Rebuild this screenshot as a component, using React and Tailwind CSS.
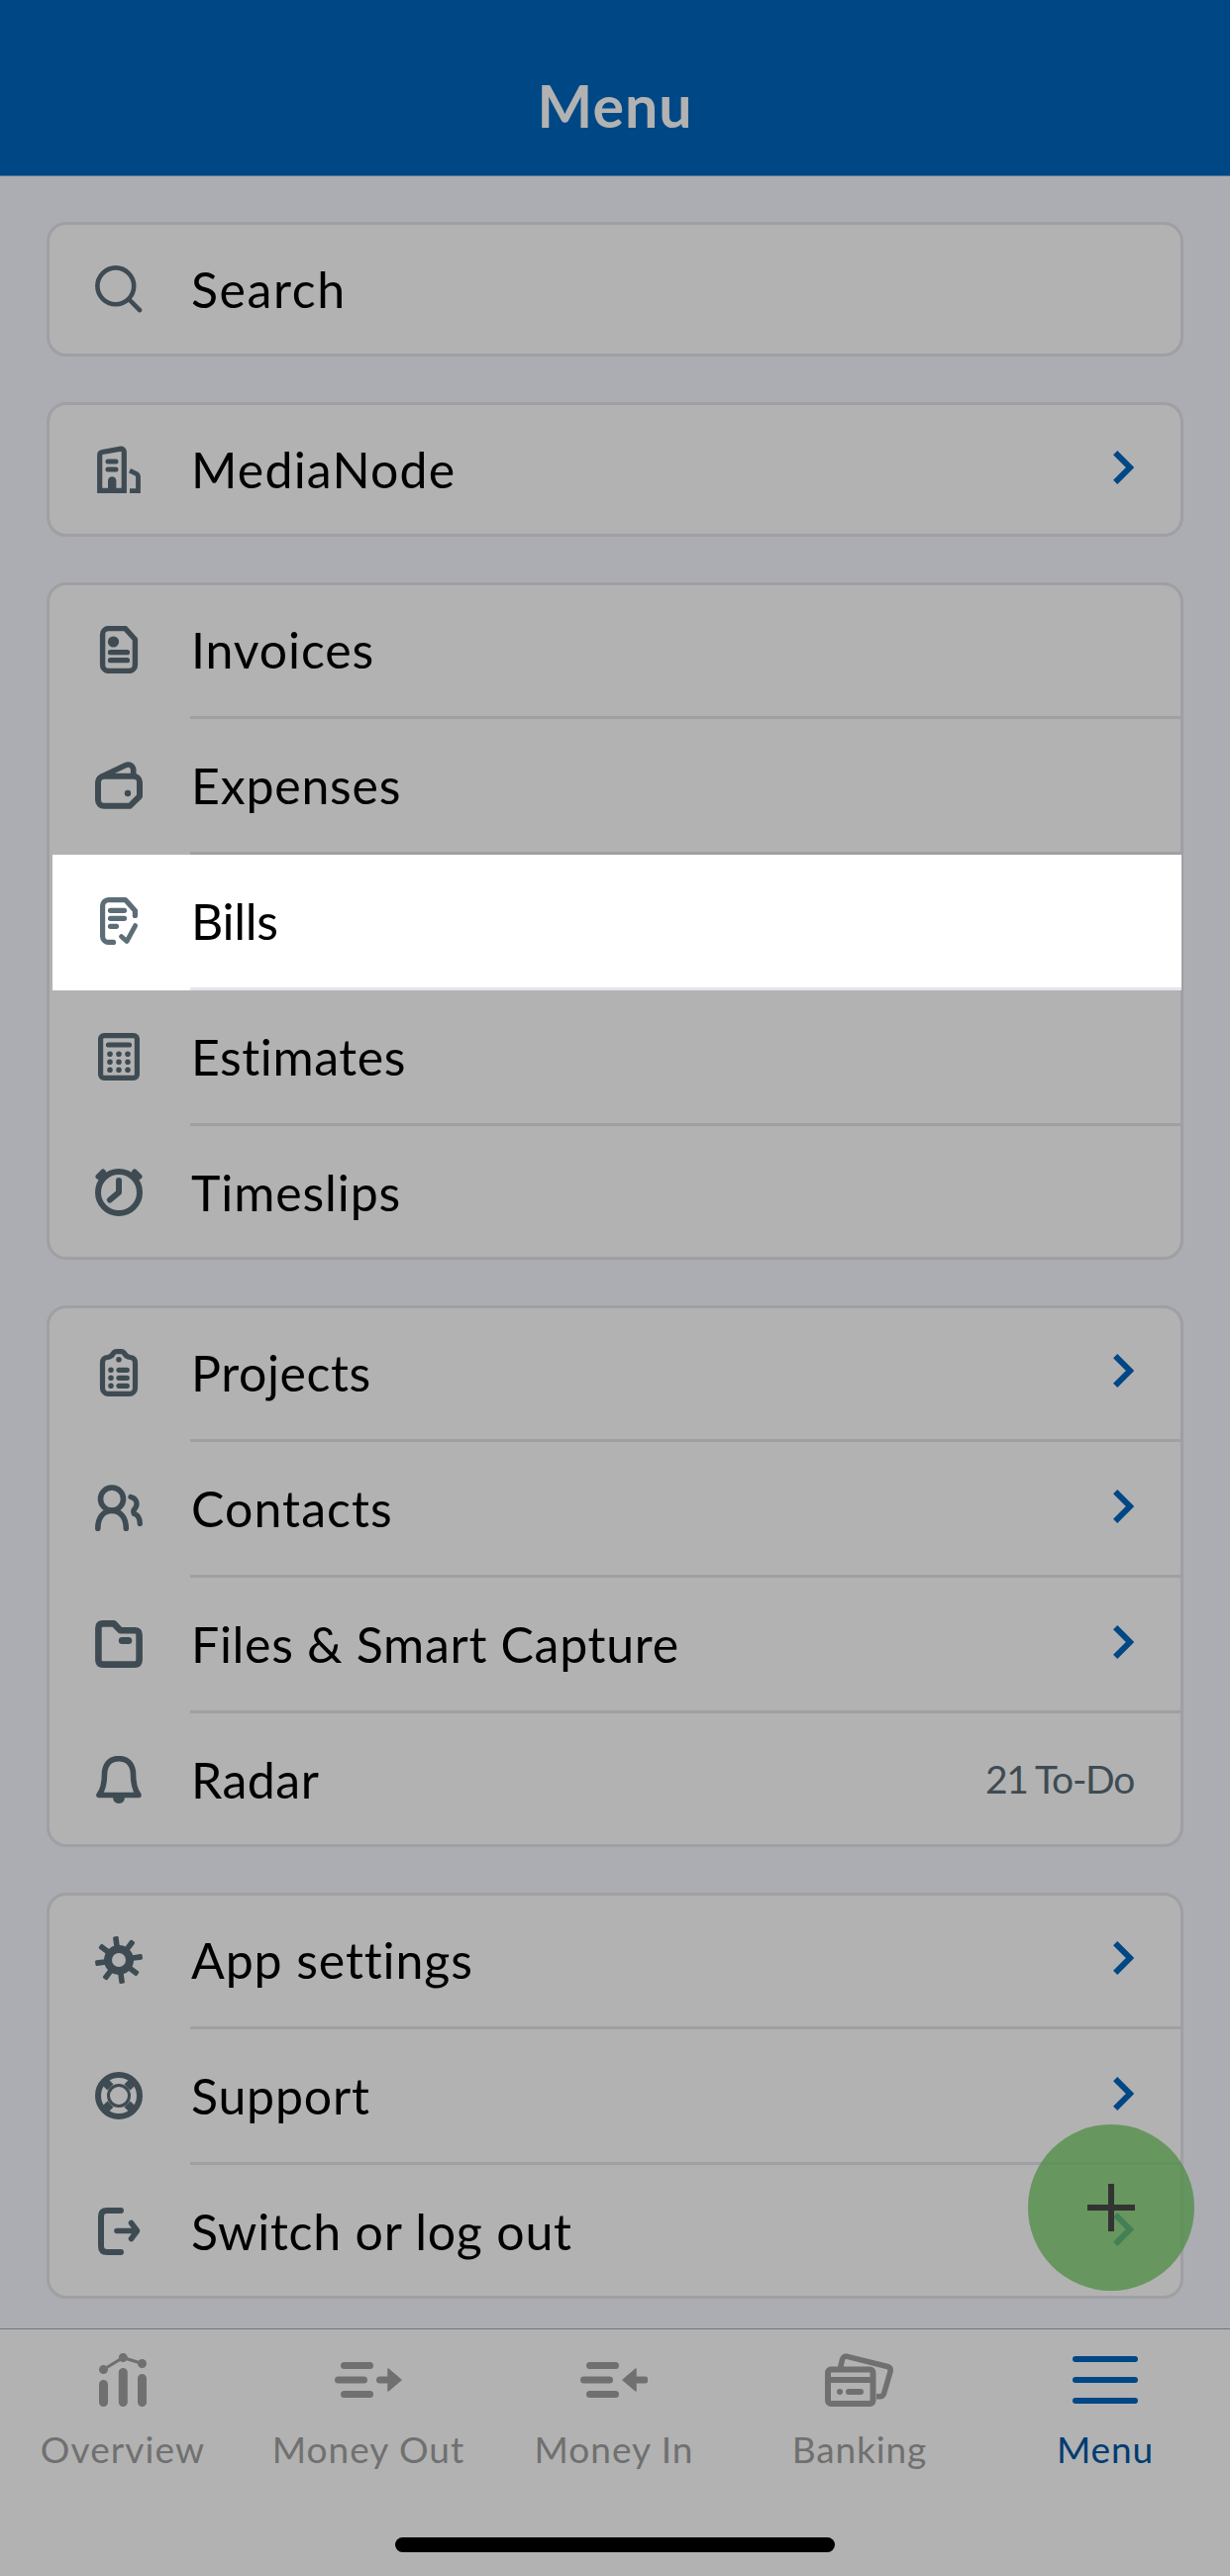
function Icon({ children }) {
  return (
    <svg viewBox="0 0 48 48" className="size-12 shrink-0" fill="none" stroke="currentColor" strokeWidth="5.6" strokeLinecap="round" strokeLinejoin="round">
      {children}
    </svg>
  );
}

const icons = {
  search: (
    <Icon>
      <circle cx="20.8" cy="20.8" r="18.4" strokeWidth="4.6" />
      <path d="M34 34 45 45.2" strokeWidth="4.6" />
    </Icon>
  ),
  company: (
    <Icon>
      <path d="M4.7 45.3V9.5a3 3 0 0 1 2.5-3L26 3.2a3 3 0 0 1 3.3 3v39.1z" strokeWidth="5.2" strokeLinejoin="miter" />
      <path d="M13 16h8M13 24h8" strokeWidth="5" />
      <path d="M13 45V35.500a4.200 4.200 0 0 1 8.400 0V45z" fill="currentColor" stroke="none" />
      <path d="M35 25.2l7 3.300q1.500 1 1.500 2.500v14.600H35" strokeWidth="4.8" strokeLinecap="butt" strokeLinejoin="miter" />
    </Icon>
  ),
  invoices: (
    <Icon>
      <path d="M13.6 2.600H30.500L40.400 13.500V39.400a6 6 0 0 1-6 6H13.600a6 6 0 0 1-6-6V8.600a6 6 0 0 1 6-6z" strokeWidth="5.4" />
      <circle cx="18.500" cy="16" r="5.600" fill="currentColor" stroke="none" />
      <path d="M15.500 26.700h17M15.500 34.700h17" strokeWidth="5.200" />
    </Icon>
  ),
  expenses: (
    <Icon>
      <path d="M9 14.800h30a6 6 0 0 1 6 6V35L35 44.800H9a6 6 0 0 1-6-6v-18a6 6 0 0 1 6-6z" strokeWidth="6" />
      <path d="M8 14.500 30 4q7-3 8.700 3.800v6" />
      <circle cx="33" cy="32" r="3.200" fill="currentColor" stroke="none" />
    </Icon>
  ),
  bills: (
    <Icon>
      <path d="M18.500 45.400h-4.900a6 6 0 0 1-6-6V8.600a6 6 0 0 1 6-6H30.500L40.400 13.500v5" strokeWidth="5.200" />
      <path d="M15.500 13.300h14M15.500 21.300h14M15.500 29.300h6" strokeWidth="5.200" />
      <path d="M26.500 39.500 32 44.500 40.700 28.500" strokeWidth="4.800" />
    </Icon>
  ),
  estimates: (
    <Icon>
      <rect x="5.600" y="2.600" width="36.800" height="42.800" rx="3.500" strokeWidth="5.200" />
      <path d="M13.500 12h21" strokeWidth="5.200" />
      <path d="M15 21.300h0M24 21.300h0M33 21.300h0M15 29.300h0M24 29.300h0M33 29.300h0M15 37.300h0M24 37.300h0M33 37.300h0" strokeWidth="5.600" />
    </Icon>
  ),
  timeslips: (
    <Icon>
      <circle cx="24" cy="24" r="21" strokeWidth="6" />
      <path d="M3.500 8 8 3.500M44.500 8 40 3.500" strokeWidth="6" />
      <path d="M24 12v12l-9 7.500" strokeWidth="6" />
    </Icon>
  ),
  projects: (
    <Icon>
      <path d="M12.500 8.500q4-.5 5.500-3.500 1.500-2.300 4-2.300h4q2.500 0 4 2.300 1.500 3 5.500 3.500 5 .5 5 5.500v25.400a6 6 0 0 1-6 6H13.500a6 6 0 0 1-6-6V14q0-5 5-5.500z" strokeWidth="5.200" />
      <path d="M24 10.700h0M16 21.300h0M16 29.300h0M16 37.300h0" strokeWidth="5.600" />
      <path d="M24 21.300h8.300M24 29.300h8.300M24 37.300h8.300" strokeWidth="5.200" />
    </Icon>
  ),
  contacts: (
    <Icon>
      <circle cx="17" cy="14.500" r="11.500" />
      <path d="M2.800 44.200C2.800 35 7 26.500 17 26.500s14.300 8.500 14.300 17.700" />
      <path d="M36 12.500q6 1.500 6 7 0 3-2 5-2 2.500-.5 5 5.500 1.500 5.800 10" strokeWidth="5.400" />
    </Icon>
  ),
  files: (
    <Icon>
      <path d="M3.400 8q0-4.600 4.600-4.600h11l6.500 6.800H40q4.600 0 4.600 4.600V40q0 4.600-4.600 4.600H8Q3.400 44.600 3.400 40z" strokeWidth="6.600" />
      <path d="M27.300 20.500h6.500" strokeWidth="7" />
    </Icon>
  ),
  radar: (
    <Icon>
      <path d="M24 2.600C14 2.600 9.500 10 9.500 18.500c0 9-1 15-5.500 21h40c-4.500-6-5.500-12-5.500-21C38.500 10 34 2.600 24 2.600z" />
      <path d="M18 41h12q0 7-6 7t-6-7z" fill="currentColor" stroke="none" />
    </Icon>
  ),
  settings: (
    <Icon>
      <circle cx="24" cy="24" r="11" strokeWidth="8" />
      {[-8, 37, 82, 127, 172, 217, 262, 307].map((deg) => (
        <path key={deg} d="M21.200 12V1.500q0-1.500 1.500-1.500h2.600q1.500 0 1.500 1.500V12z" fill="currentColor" stroke="none" transform={`rotate(${deg} 24 24)`} />
      ))}
    </Icon>
  ),
  support: (
    <Icon>
      <circle cx="24" cy="24" r="21" strokeWidth="6" />
      <circle cx="24" cy="24" r="10.500" strokeWidth="3" />
      <path d="M15.500 15.500 10 10M32.500 15.500 38 10M15.500 32.500 10 38M32.500 32.500 38 38" strokeWidth="8.500" strokeLinecap="butt" />
    </Icon>
  ),
  logout: (
    <Icon>
      <path d="M26 3H12q-6 0-6 6v30q0 6 6 6h14" strokeWidth="6" />
      <path d="M22 23.500h18M36.500 15.500l6 8-6 8" strokeWidth="5.600" />
    </Icon>
  ),
};

const groups = [
  [{ icon: "search", label: "Search", track: "tracking-[1.6px]" }],
  [{ icon: "company", label: "MediaNode", track: "tracking-[1.2px]", chevron: true }],
  [
    { icon: "invoices", label: "Invoices", track: "tracking-[0.9px]" },
    { icon: "expenses", label: "Expenses", track: "tracking-[0.8px]" },
    { icon: "bills", label: "Bills", track: "tracking-[-0.3px]", active: true },
    { icon: "estimates", label: "Estimates", track: "tracking-[0.6px]" },
    { icon: "timeslips", label: "Timeslips", track: "tracking-[0.9px]" },
  ],
  [
    { icon: "projects", label: "Projects", track: "tracking-[0.6px]", chevron: true },
    { icon: "contacts", label: "Contacts", track: "tracking-[1.1px]", chevron: true },
    { icon: "files", label: "Files & Smart Capture", track: "tracking-[0.7px]", chevron: true },
    { icon: "radar", label: "Radar", track: "tracking-[0.5px]", note: "21 To-Do" },
  ],
  [
    { icon: "settings", label: "App settings", track: "tracking-[0.9px]", chevron: true },
    { icon: "support", label: "Support", track: "tracking-[0.8px]", chevron: true },
    { icon: "logout", label: "Switch or log out", track: "tracking-[0.8px]", chevron: true },
  ],
];

function Chevron() {
  return (
    <svg viewBox="0 0 21 34" className="w-[21px] h-[34px] -mt-1" fill="none" stroke="#004785" strokeWidth="6">
      <path d="M2.200 2.200 17 17 2.200 31.800" />
    </svg>
  );
}

// the first and last rows share their height with the card border
function rowSize(index, count) {
  if (count === 1) return "h-[130px]";
  if (index === 0) return "h-[135px]";
  if (index === count - 1) return "h-[132px] pt-[2px]";
  return "h-[137px]";
}

function Row({ item, index, count }) {
  const last = index === count - 1;
  const first = index === 0 && count > 1;
  const tone = item.active ? "bg-white text-[#5c6d77] ml-[3px] -mr-px pl-[43px]" : "text-[#3f4b53] pl-[46px]";
  const line = last ? "" : item.active ? "border-b-3 border-[#e4e4eb]" : "border-b-3 border-[#9f9fa4]";
  return (
    <div className={`flex ${rowSize(index, count)} ${tone}`}>
      <div className={`flex items-center w-24 ${first ? "pb-[5px]" : last ? "" : "pb-[3px]"}`}>{icons[item.icon]}</div>
      <div className={`flex flex-1 items-center justify-between pl-px pr-[47px] ${first ? "pb-[2px]" : ""} ${line}`}>
        <span className={`text-[50px] leading-none text-black whitespace-nowrap ${item.track}`}>{item.label}</span>
        {item.chevron && <Chevron />}
        {item.note && <span className="text-[39px] leading-none tracking-[-1.3px] -mt-[2px]">{item.note}</span>}
      </div>
    </div>
  );
}

const tabs = [
  {
    label: "Overview",
    track: "tracking-[1.1px]",
    icon: (
      <svg viewBox="0 0 48 54" className="w-12 h-[54px]" fill="none" stroke="currentColor" strokeWidth="9" strokeLinecap="round">
        <path d="M4.500 31.500v18M24.300 19.500v30M43.500 25.500v24" />
        <path d="M4.500 16.500 24.300 4.500 43.500 10.500" strokeWidth="3" />
        <path d="M4.500 16.500h0M24.300 4.500h0M43.500 10.500h0" />
      </svg>
    ),
  },
  {
    label: "Money Out",
    track: "tracking-[1px]",
    icon: (
      <svg viewBox="0 0 68 36" className="w-[68px] h-9" fill="none" stroke="currentColor" strokeWidth="7" strokeLinecap="round">
        <path d="M9.500 3.500h26M3.500 18h26M9.500 32.500h26M45.500 18h10" />
        <path d="M54 7 67 18 54 29z" fill="currentColor" strokeWidth="1.500" strokeLinejoin="round" />
      </svg>
    ),
  },
  {
    label: "Money In",
    track: "tracking-[1px]",
    icon: (
      <svg viewBox="0 0 68 36" className="w-[68px] h-9" fill="none" stroke="currentColor" strokeWidth="7" strokeLinecap="round">
        <path d="M9.500 3.500h26M3.500 18h26M9.500 32.500h26M58 18h7" />
        <path d="M56 7 43 18l13 11z" fill="currentColor" strokeWidth="1.500" strokeLinejoin="round" />
      </svg>
    ),
  },
  {
    label: "Banking",
    track: "tracking-[0.9px]",
    icon: (
      <svg viewBox="0 0 70 54" className="w-[70px] h-[54px]" fill="none" stroke="currentColor" strokeWidth="6" strokeLinecap="round" strokeLinejoin="round">
        <rect x="3" y="16.500" width="45.500" height="34.500" rx="3" />
        <path d="M4 27h44" />
        <path d="M15 39h0M24 39h12" />
        <path d="M15.500 15l2-8.500q1.200-4 5-3.200L63 13.500q4 1.200 3 5.300L59.500 41q-1.500 3.500-5.500 2.700H52" strokeWidth="5.500" strokeLinecap="butt" />
      </svg>
    ),
  },
  {
    label: "Menu",
    track: "tracking-[0.9px]",
    active: true,
    icon: (
      <svg viewBox="0 0 66 48" className="w-[66px] h-12" fill="none" stroke="#004785" strokeWidth="6" strokeLinecap="round">
        <path d="M3 3h60M3 24h60M3 45h60" />
      </svg>
    ),
  },
];

export default function App() {
  return (
    <div className="relative flex flex-col w-[1242px] h-[2601px] overflow-hidden bg-[#acadb3] font-['Lato','Liberation_Sans',sans-serif]">
      <header className="flex justify-center h-[178px] pt-[71px] bg-[#004785] border-b border-[#4d7599]">
        <h1 className="text-[59px] leading-[72px] font-bold tracking-[1px] text-[#b2b2b2]">Menu</h1>
      </header>

      <main className="flex flex-col flex-1 gap-[46px] px-[47px] pt-[46px]">
        {groups.map((group) => (
          <section key={group[0].label} className="border-3 border-[#9f9fa4] rounded-[20px] bg-[#b2b2b2]">
            {group.map((item, i) => (
              <Row key={item.label} item={item} index={i} count={group.length} />
            ))}
          </section>
        ))}
      </main>

      <button className="absolute left-[1038px] top-[2145px] size-[168px] rounded-full bg-[#548f4a]/80 flex items-center justify-center">
        <svg viewBox="0 0 48 48" className="size-12" stroke="#333333" strokeWidth="6">
          <path d="M24 0v48M0 24h48" />
        </svg>
      </button>

      <footer className="flex flex-col items-center h-[250px] bg-[#b2b2b2] border-t border-[#76777f]">
        <nav className="grid grid-cols-5 w-full pt-[21px] pr-[2px]">
          {tabs.map((tab) => (
            <div key={tab.label} className={`flex flex-col items-center ${tab.active ? "text-[#003c70]" : "text-[#707070]"}`}>
              <div className="flex items-center h-[60px]">{tab.icon}</div>
              <span className={`mt-[18px] text-[37px] leading-[44px] ${tab.track}`}>{tab.label}</span>
            </div>
          ))}
        </nav>
        <div className="mt-[67px] w-[444px] h-[15px] rounded-full bg-black" />
      </footer>
    </div>
  );
}
